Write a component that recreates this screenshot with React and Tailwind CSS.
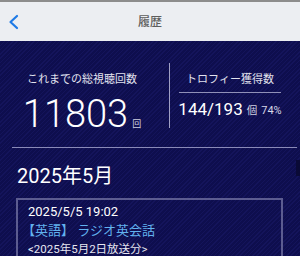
export default function App() {
  return (
    <div className="relative w-[300px] h-[256px] overflow-hidden bg-[#0f0f50] bg-[image:repeating-linear-gradient(135deg,#0e0e4e_0px,#0e0e4e_2px,#14145b_2px,#14145b_3px)] font-['Roboto','Noto_Sans_CJK_JP',sans-serif] text-white">
      <div className="h-[2px] bg-[#8c8c8c]" />
      <header className="relative h-[39px] bg-[#eceef2] flex items-center justify-center">
        <svg className="absolute left-[7px] top-[12px]" width="14" height="16" viewBox="0 0 14 16">
          <polyline points="10,2 3.5,8 10,14" fill="none" stroke="#1f7ae6" strokeWidth="2.2" strokeLinecap="round" strokeLinejoin="round" />
        </svg>
        <span className="text-[12px] leading-[16px] text-[#5e5e5e] font-medium">履歴</span>
      </header>

      <section className="flex h-[106px]">
        <div className="w-[169px] pr-[5px] pt-[31px] flex flex-col items-center">
          <div className="text-[11px] leading-[16px] text-[#e2e2ee]">これまでの総視聴回数</div>
          <div className="mt-[7px] flex items-end">
            <span className="text-[38px] leading-[38px] font-light">11803</span>
            <span className="ml-[4px] mb-[4px] text-[9px] leading-[10px] text-[#d0d0e0]">回</span>
          </div>
        </div>
        <div className="mt-[22px] w-px h-[65px] bg-[#a0a0c4]" />
        <div className="flex-1 pr-[10px] pt-[31px] flex flex-col items-center">
          <div className="text-[11px] leading-[16px] text-[#e2e2ee]">トロフィー獲得数</div>
          <div className="mt-[4px] h-px w-[102px] bg-[#9090b8]" />
          <div className="mt-[7px] flex items-end">
            <span className="text-[17px] leading-[18px]">144/193</span>
            <span className="ml-[4px] mb-[1px] text-[10.5px] leading-[12px] text-[#d0d0e0]">個</span>
            <span className="ml-[4px] mb-[1px] text-[11px] leading-[12px] text-[#d8d8e6]">74%</span>
          </div>
        </div>
      </section>
      <div className="ml-[12px] mr-[3px] h-px bg-[#8a8ab8]" />

      <h2 className="mt-[16px] pl-[17px] text-[20px] leading-[24px]">2025年5月</h2>

      <div className="mt-[10px] ml-[16px] w-[267px] h-[80px] border-2 border-[#5c5c90] pl-[10px] pt-[3px]">
        <div className="text-[13px] leading-[18px]">2025/5/5 19:02</div>
        <div className="text-[13px] leading-[20px] text-[#62b2ee] -ml-[6px]">【英語】 ラジオ英会話</div>
        <div className="text-[11.5px] leading-[16px] text-[#e6e6f0]">&lt;2025年5月2日放送分&gt;</div>
      </div>

      <div className="absolute right-0 top-[160px] w-[4px] h-[16px] bg-[#0a0a36]" />
    </div>
  );
}
